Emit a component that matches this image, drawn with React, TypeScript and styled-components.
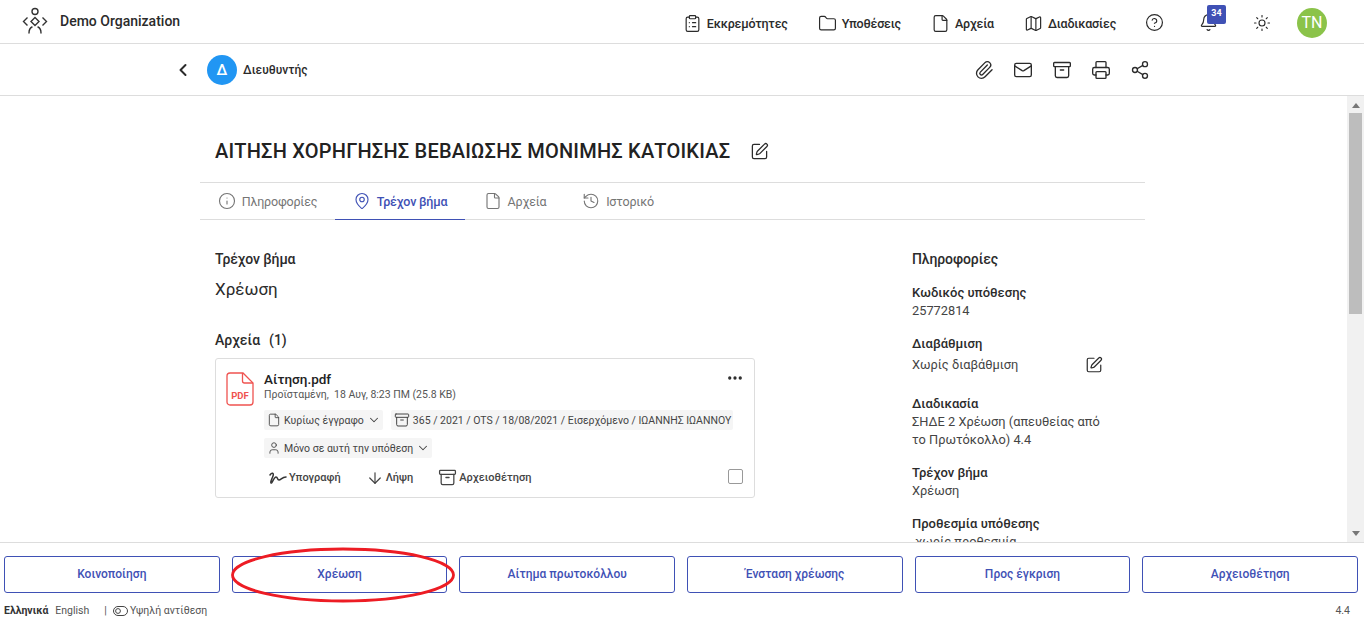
import styled, { createGlobalStyle } from "styled-components";
import {
  Archive,
  ArrowDown,
  Bell,
  ChevronDown,
  ChevronLeft,
  ClipboardList,
  File,
  Folder,
  History,
  Info,
  Mail,
  Map,
  MapPin,
  MoreHorizontal,
  Paperclip,
  Printer,
  Share2,
  SquarePen,
  Sun,
  CircleHelp,
  User,
} from "lucide-react";

const GlobalStyle = createGlobalStyle`
  html, body {
    margin: 0;
    height: 100%;
    overflow: hidden;
  }
  body {
    font-family: Roboto, "Noto Sans", sans-serif;
    color: #2b2b2b;
    background: #fff;
  }
  #root {
    height: 100%;
  }
  * {
    box-sizing: border-box;
  }
`;

const navItems = [
  { label: "Εκκρεμότητες", icon: ClipboardList },
  { label: "Υποθέσεις", icon: Folder },
  { label: "Αρχεία", icon: File },
  { label: "Διαδικασίες", icon: Map },
];

const tabs = [
  { label: "Πληροφορίες", icon: Info, width: 135 },
  { label: "Τρέχον βήμα", icon: MapPin, width: 130, active: true },
  { label: "Αρχεία", icon: File, width: 100 },
  { label: "Ιστορικό", icon: History, width: 106 },
];

const actions = [
  "Κοινοποίηση",
  "Χρέωση",
  "Αίτημα πρωτοκόλλου",
  "Ένσταση χρέωσης",
  "Προς έγκριση",
  "Αρχειοθέτηση",
];

const App = () => {
  return (
    <Page>
      <GlobalStyle />
      <TopBar>
        <Brand>
          <LogoMark />
          <BrandName>Demo Organization</BrandName>
        </Brand>
        <Nav>
          {navItems.map(({ label, icon: Icon }) => (
            <NavItem key={label}>
              <Icon size={19} strokeWidth={1.5} />
              {label}
            </NavItem>
          ))}
        </Nav>
        <TopIcons>
          <CircleHelp size={19} strokeWidth={1.5} />
          <BellWrap>
            <Bell size={19} strokeWidth={1.5} />
            <Badge>34</Badge>
          </BellWrap>
          <Sun size={18} strokeWidth={1.5} />
          <Avatar>TN</Avatar>
        </TopIcons>
      </TopBar>

      <SubBar>
        <SubLeft>
          <ChevronLeft size={20} strokeWidth={2.4} />
          <RoleCircle>Δ</RoleCircle>
          <RoleName>Διευθυντής</RoleName>
        </SubLeft>
        <SubIcons>
          <Paperclip size={20} strokeWidth={1.6} />
          <Mail size={20} strokeWidth={1.6} />
          <Archive size={20} strokeWidth={1.6} />
          <Printer size={20} strokeWidth={1.6} />
          <Share2 size={20} strokeWidth={1.6} />
        </SubIcons>
      </SubBar>

      <Main>
        <Content>
          <TitleRow>
            <Title>ΑΙΤΗΣΗ ΧΟΡΗΓΗΣΗΣ ΒΕΒΑΙΩΣΗΣ ΜΟΝΙΜΗΣ ΚΑΤΟΙΚΙΑΣ</Title>
            <SquarePen size={19} strokeWidth={1.6} />
          </TitleRow>
          <TabBar>
            {tabs.map(({ label, icon: Icon, width, active }) => (
              <Tab key={label} $active={active} $width={width}>
                <Icon size={18} strokeWidth={1.5} />
                {label}
              </Tab>
            ))}
          </TabBar>
          <Columns>
            <LeftColumn>
              <SectionTitle>Τρέχον βήμα</SectionTitle>
              <StepName>Χρέωση</StepName>
              <FilesTitle>
                Αρχεία<FilesCount>(1)</FilesCount>
              </FilesTitle>
              <FileCard>
                <PdfIcon />
                <FileBody>
                  <FileName>Αίτηση.pdf</FileName>
                  <FileMeta>Προϊσταμένη,&nbsp; 18 Αυγ, 8:23 ΠΜ (25.8 KB)</FileMeta>
                  <ChipRow>
                    <Chip>
                      <File size={14} strokeWidth={1.5} />
                      Κυρίως έγγραφο
                      <ChevronDown size={14} strokeWidth={1.8} />
                    </Chip>
                    <Chip>
                      <Archive size={16} strokeWidth={1.5} />
                      365 / 2021 / OTS / 18/08/2021 / Εισερχόμενο / ΙΩΑΝΝΗΣ ΙΩΑΝΝΟΥ
                    </Chip>
                  </ChipRow>
                  <ChipRow>
                    <Chip>
                      <User size={14} strokeWidth={1.5} />
                      Μόνο σε αυτή την υπόθεση
                      <ChevronDown size={14} strokeWidth={1.8} />
                    </Chip>
                  </ChipRow>
                  <FileActions>
                    <FileAction>
                      <SignIcon />
                      Υπογραφή
                    </FileAction>
                    <FileAction>
                      <ArrowDown size={18} strokeWidth={1.6} />
                      Λήψη
                    </FileAction>
                    <FileAction>
                      <Archive size={19} strokeWidth={1.6} />
                      Αρχειοθέτηση
                    </FileAction>
                  </FileActions>
                </FileBody>
                <MoreButton>
                  <MoreHorizontal size={18} strokeWidth={2.4} />
                </MoreButton>
                <CardCheck />
              </FileCard>
            </LeftColumn>
            <InfoColumn>
              <InfoHeading>Πληροφορίες</InfoHeading>
              <InfoBlock>
                <InfoLabel>Κωδικός υπόθεσης</InfoLabel>
                <InfoValue>25772814</InfoValue>
              </InfoBlock>
              <InfoBlock>
                <InfoLabel>Διαβάθμιση</InfoLabel>
                <EditRow>
                  <InfoValue>Χωρίς διαβάθμιση</InfoValue>
                  <SquarePen size={18} strokeWidth={1.6} />
                </EditRow>
              </InfoBlock>
              <InfoBlock>
                <InfoLabel>Διαδικασία</InfoLabel>
                <InfoValue>ΣΗΔΕ 2 Χρέωση (απευθείας από το Πρωτόκολλο) 4.4</InfoValue>
              </InfoBlock>
              <InfoBlock>
                <InfoLabel>Τρέχον βήμα</InfoLabel>
                <InfoValue>Χρέωση</InfoValue>
              </InfoBlock>
              <InfoBlock>
                <InfoLabel>Προθεσμία υπόθεσης</InfoLabel>
                <InfoValue>&nbsp;χωρίς προθεσμία</InfoValue>
              </InfoBlock>
            </InfoColumn>
          </Columns>
        </Content>
        <ScrollRail>
          <ScrollArrow viewBox="0 0 8 5">
            <path d="M4 0 8 5H0Z" />
          </ScrollArrow>
          <ScrollThumb />
          <ScrollArrow viewBox="0 0 8 5">
            <path d="M0 0H8L4 5Z" />
          </ScrollArrow>
        </ScrollRail>
      </Main>

      <Footer>
        <ActionGrid>
          {actions.map((label) => (
            <ActionButton key={label}>{label}</ActionButton>
          ))}
        </ActionGrid>
        <LangRow>
          <LangActive>Ελληνικά</LangActive>
          <LangLink>English</LangLink>
          <Divider>|</Divider>
          <ContrastIcon />
          <ContrastLabel>Υψηλή αντίθεση</ContrastLabel>
          <Version>4.4</Version>
        </LangRow>
        <Annotation viewBox="0 0 224 56" fill="none">
          <ellipse cx="112" cy="28" rx="110.5" ry="26" stroke="#ed1c24" strokeWidth="2.8" />
        </Annotation>
      </Footer>
    </Page>
  );
};

const LogoMark = () => (
  <svg width="26" height="28" viewBox="0 0 26 28" fill="none" stroke="#333" strokeWidth="1.4">
    <circle cx="13" cy="4.5" r="3" />
    <path d="M13 10.5 17 14.5 13 18.5 9 14.5Z" />
    <path d="M5.5 10.5 1.5 14.5 5.5 18.5M20.5 10.5 24.5 14.5 20.5 18.5" />
    <path d="M7 26c0-3 1-5 3-6M19 26c0-3-1-5-3-6" strokeLinecap="round" />
  </svg>
);

const PdfIcon = () => (
  <PdfSvg width="28" height="34" viewBox="0 0 28 34" fill="none">
    <path
      d="M4 1h13l10 10v19a3 3 0 0 1-3 3H4a3 3 0 0 1-3-3V4a3 3 0 0 1 3-3Z"
      stroke="#ef5350"
      strokeWidth="1.3"
    />
    <path d="M16.5 1v8a2 2 0 0 0 2 2H27" stroke="#ef5350" strokeWidth="1.3" />
    <PdfLabel x="14" y="27" textAnchor="middle">
      PDF
    </PdfLabel>
  </PdfSvg>
);

const SignIcon = () => (
  <svg width="18" height="14" viewBox="0 0 18 14" fill="none" stroke="#333" strokeWidth="1.5">
    <path d="M1 4c2-3 4-2 3 1s-3 6-2 7 3-6 5-6 1 3 3 3 3-3 7-3" strokeLinecap="round" />
  </svg>
);

const ContrastIcon = () => (
  <svg width="15" height="10" viewBox="0 0 15 10" fill="none" stroke="#444" strokeWidth="1">
    <rect x="0.5" y="0.5" width="14" height="9" rx="4.5" />
    <circle cx="5" cy="5" r="2.4" />
  </svg>
);

export default App;

const Page = styled.div`
  position: relative;
  height: 100vh;
  display: flex;
  flex-direction: column;
`;

const TopBar = styled.header`
  height: 44px;
  flex: none;
  display: flex;
  align-items: center;
  padding: 0 37px 2px 22px;
  border-bottom: 1px solid #ddd;
`;

const Brand = styled.div`
  display: flex;
  align-items: center;
  gap: 12px;
  margin-right: auto;
`;

const BrandName = styled.span`
  font-size: 14px;
  font-weight: 500;
`;

const Nav = styled.nav`
  display: flex;
  align-items: center;
  gap: 30px;
  margin: 5px 29px 0 0;
`;

const NavItem = styled.a`
  display: flex;
  align-items: center;
  gap: 5px;
  font-size: 12.5px;
  font-weight: 500;
  letter-spacing: -0.2px;
`;

const TopIcons = styled.div`
  display: flex;
  align-items: center;
  gap: 35px;
  margin-top: 4px;
`;

const BellWrap = styled.div`
  position: relative;
  display: flex;
`;

const Badge = styled.span`
  position: absolute;
  top: -8px;
  left: 8px;
  width: 19px;
  height: 19px;
  border-radius: 2px;
  background: #3f51b5;
  color: #fff;
  font-size: 9px;
  font-weight: 700;
  line-height: 17px;
  text-align: center;
`;

const Avatar = styled.span`
  width: 30px;
  height: 30px;
  margin-left: -9px;
  border-radius: 50%;
  background: #8bc34a;
  color: #fff;
  font-size: 16px;
  line-height: 30px;
  text-align: center;
`;

const SubBar = styled.div`
  height: 52px;
  flex: none;
  display: flex;
  align-items: center;
  justify-content: space-between;
  padding: 0 214px 0 173px;
  border-bottom: 1px solid #ddd;
`;

const SubLeft = styled.div`
  display: flex;
  align-items: center;
`;

const RoleCircle = styled.span`
  width: 30px;
  height: 30px;
  margin: 0 6px 0 14px;
  border-radius: 50%;
  background: #2196f3;
  color: #fff;
  font-size: 15px;
  font-weight: 500;
  line-height: 30px;
  text-align: center;
`;

const RoleName = styled.span`
  font-size: 12px;
  font-weight: 500;
`;

const SubIcons = styled.div`
  display: flex;
  align-items: center;
  gap: 19px;
`;

const Main = styled.main`
  position: relative;
  flex: 1;
  min-height: 0;
  overflow: hidden;
`;

const ScrollRail = styled.div`
  position: absolute;
  top: 0;
  right: 0;
  bottom: 0;
  width: 17px;
  display: flex;
  flex-direction: column;
  align-items: center;
  padding: 7px 0 6px;
  background: #f1f1f1;
`;

const ScrollArrow = styled.svg`
  flex: none;
  width: 8px;
  height: 5px;
  fill: #777;
`;

const ScrollThumb = styled.div`
  width: 13px;
  height: 201px;
  margin: 5px 0 auto;
  background: #bdbdbd;
`;

const Content = styled.div`
  width: 945px;
  margin-left: 200px;
`;

const TitleRow = styled.div`
  display: flex;
  align-items: center;
  gap: 20px;
  height: 86px;
  padding: 24px 0 0 15px;
`;

const Title = styled.h1`
  margin: 0;
  font-size: 20px;
  font-weight: 500;
  letter-spacing: 0.2px;
  color: #222;
`;

const TabBar = styled.div`
  display: flex;
  height: 38px;
  border-top: 1px solid #ddd;
  border-bottom: 1px solid #ddd;
`;

const Tab = styled.div<{ $active?: boolean; $width: number }>`
  width: ${(p) => p.$width}px;
  display: flex;
  align-items: center;
  justify-content: center;
  gap: 6px;
  margin-bottom: -1px;
  font-size: 12.5px;
  letter-spacing: -0.2px;
  font-weight: ${(p) => (p.$active ? 500 : 400)};
  color: ${(p) => (p.$active ? "#3f51b5" : "#757575")};
  border-bottom: 1px solid ${(p) => (p.$active ? "#3f51b5" : "transparent")};
`;

const Columns = styled.div`
  display: flex;
  padding: 30px 0 0 15px;
`;

const LeftColumn = styled.div`
  width: 540px;
`;

const SectionTitle = styled.div`
  font-size: 14px;
  font-weight: 500;
  line-height: 18px;
  letter-spacing: -0.1px;
`;

const StepName = styled.div`
  margin-top: 10px;
  font-size: 17px;
  line-height: 22px;
`;

const FilesTitle = styled.div`
  margin-top: 31px;
  font-size: 14px;
  font-weight: 500;
  line-height: 18px;
`;

const FilesCount = styled.span`
  margin-left: 9px;
`;

const FileCard = styled.div`
  position: relative;
  display: flex;
  margin-top: 9px;
  width: 540px;
  height: 140px;
  padding: 13px 10px 0;
  border: 1px solid #ddd;
  border-radius: 3px;
`;

const PdfSvg = styled.svg`
  flex: none;
  margin-right: 10px;
`;

const PdfLabel = styled.text`
  fill: #ef5350;
  font-size: 9.5px;
  font-weight: 700;
  font-family: Roboto, sans-serif;
`;

const FileBody = styled.div`
  min-width: 0;
`;

const FileName = styled.div`
  font-size: 13.5px;
  font-weight: 500;
  line-height: 15px;
  color: #222;
`;

const FileMeta = styled.div`
  margin-top: 1px;
  font-size: 10.5px;
  line-height: 14px;
  color: #555;
`;

const ChipRow = styled.div`
  display: flex;
  gap: 8px;
  margin-top: 8px;
  white-space: nowrap;
`;

const Chip = styled.span`
  display: flex;
  align-items: center;
  gap: 3px;
  height: 20px;
  padding: 0 2px 0 3px;
  border-radius: 2px;
  background: #f5f5f5;
  font-size: 10.5px;
  color: #444;
`;

const FileActions = styled.div`
  display: flex;
  align-items: center;
  gap: 25px;
  margin-top: 10px;
  padding-left: 5px;
`;

const FileAction = styled.span`
  display: flex;
  align-items: center;
  gap: 2px;
  font-size: 11px;
  font-weight: 500;
  color: #444;
`;

const MoreButton = styled.span`
  position: absolute;
  top: 10px;
  right: 10px;
  display: flex;
`;

const CardCheck = styled.span`
  position: absolute;
  right: 11px;
  bottom: 13px;
  width: 15px;
  height: 15px;
  border: 1px solid #999;
  border-radius: 2px;
`;

const InfoColumn = styled.aside`
  width: 191px;
  margin-left: 157px;
`;

const InfoHeading = styled.div`
  font-size: 14px;
  font-weight: 500;
  line-height: 18px;
  letter-spacing: -0.1px;
  margin-bottom: 16px;
`;

const InfoBlock = styled.div`
  margin-bottom: 15px;
`;

const InfoLabel = styled.div`
  font-size: 13px;
  font-weight: 500;
  line-height: 18px;
`;

const InfoValue = styled.div`
  font-size: 12.8px;
  line-height: 18px;
  color: #444;
`;

const EditRow = styled.div`
  display: flex;
  align-items: center;
  justify-content: space-between;
  padding: 3px 0 6px;
`;

const Footer = styled.footer`
  position: relative;
  height: 81px;
  flex: none;
  padding: 13px 6px 0 4px;
  border-top: 1px solid #ddd;
`;

const ActionGrid = styled.div`
  display: grid;
  grid-template-columns: repeat(6, 1fr);
  gap: 12px;
`;

const ActionButton = styled.button`
  height: 37px;
  padding: 0 0 2px;
  border: 1px solid #3f51b5;
  border-radius: 3px;
  background: #fff;
  color: #3f51b5;
  font-family: inherit;
  font-size: 12px;
  font-weight: 500;
`;

const LangRow = styled.div`
  display: flex;
  align-items: center;
  margin-top: 11px;
  padding-right: 8px;
  font-size: 10.5px;
  color: #555;
`;

const LangActive = styled.strong`
  font-weight: 700;
  color: #333;
`;

const LangLink = styled.span`
  margin-left: 7px;
`;

const Divider = styled.span`
  margin: 0 6px 0 15px;
`;

const ContrastLabel = styled.span`
  margin-left: 2px;
`;

const Version = styled.span`
  margin-left: auto;
`;

const Annotation = styled.svg`
  position: absolute;
  left: 231px;
  top: 4px;
  width: 224px;
  height: 56px;
  pointer-events: none;
`;
